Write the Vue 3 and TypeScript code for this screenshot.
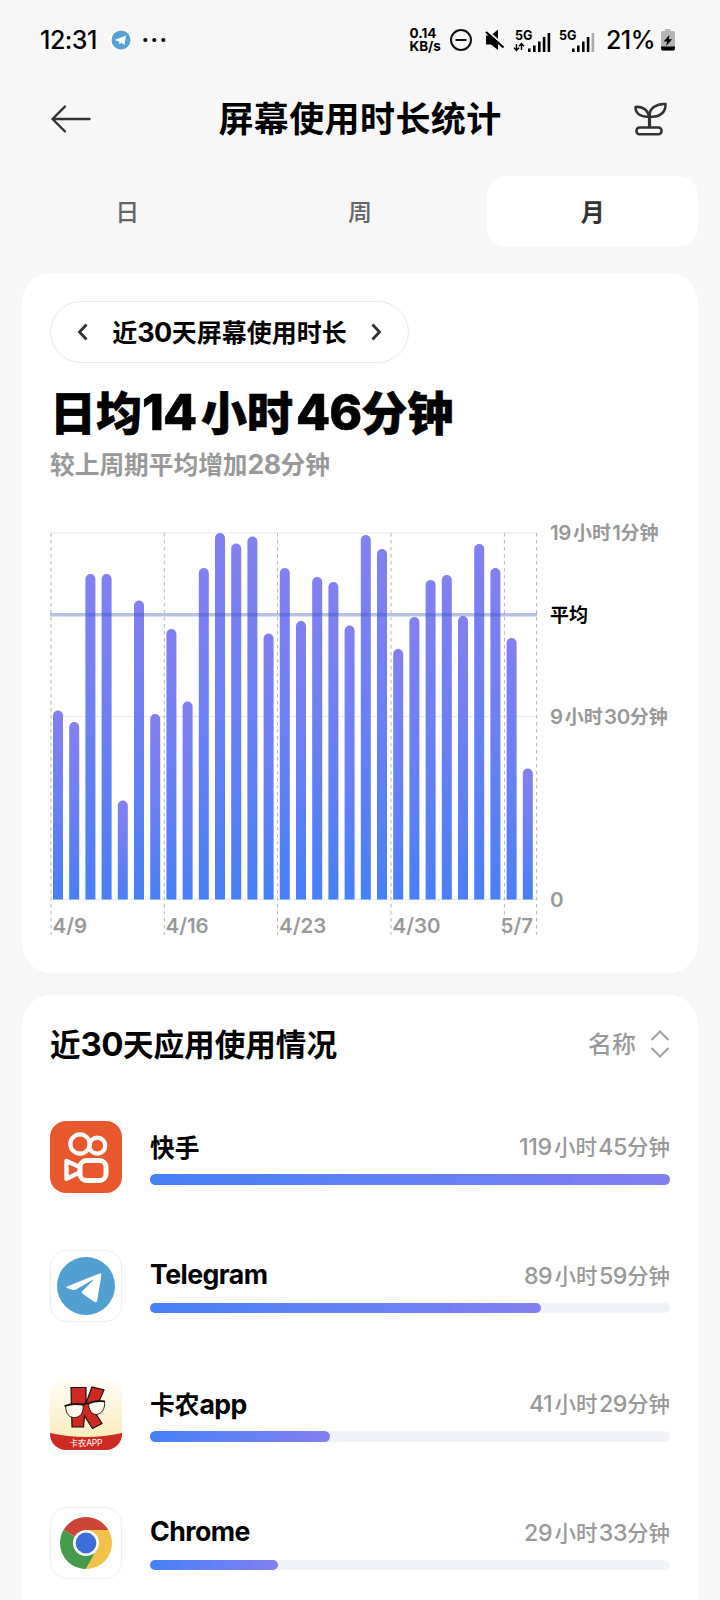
<script setup lang="ts">
import { computed, h, ref } from 'vue'

interface AppUsage {
  id: string
  name: string
  time: string
  percent: number
}

const tabs = ['日', '周', '月']
const activeTab = ref(2)

// digits and latin letters are set a little larger than the hanzi around them
const MixedText = (props: { text: string }) =>
  h(
    'span',
    { class: 'mixed' },
    props.text
      .split(/([0-9A-Za-z/]+)/)
      .filter(Boolean)
      .map((part) => (/[0-9A-Za-z]/.test(part) ? h('span', { class: 'latin' }, part) : part))
  )
MixedText.props = ['text']

const plot = { left: 1, right: 487, top: 13, bottom: 379.5, foot: 415 }
const step = 16.2

// bar heights in plot units, one per day
const days = [
  189, 177.5, 325.5, 325.5, 99, 299, 185.5, 270.5, 198, 331.5,
  366.5, 356, 363, 266, 331.5, 278.5, 322.5, 317.5, 274, 364.5,
  350.5, 250.5, 282.5, 319.5, 324.5, 283.5, 355.5, 331.5, 261.5, 131
]

const barPath = (index: number, height: number) => {
  const x = plot.left + 2 + index * step
  const y = plot.bottom - height
  return `M${x} ${plot.bottom}V${y + 5}a5 5 0 0 1 10 0V${plot.bottom}z`
}

const bars = computed(() => days.map((height, index) => barPath(index, height)))
const weekLines = [1, 114.3, 227.6, 341, 454.4, 486.6]

const dates = [
  { x: 2.5, label: '4/9' },
  { x: 115.5, label: '4/16' },
  { x: 229, label: '4/23' },
  { x: 342.5, label: '4/30' },
  { x: 450.5, label: '5/7' }
]

const apps: AppUsage[] = [
  { id: 'kuaishou', name: '快手', time: '119小时45分钟', percent: 100 },
  { id: 'telegram', name: 'Telegram', time: '89小时59分钟', percent: 75.1 },
  { id: 'kanong', name: '卡农app', time: '41小时29分钟', percent: 34.6 },
  { id: 'chrome', name: 'Chrome', time: '29小时33分钟', percent: 24.7 }
]
</script>

<template>
  <div class="screen">
    <div class="status">
      <span class="clock">12:31</span>
      <svg class="status-telegram" width="22" height="22" viewBox="0 0 22 22">
        <circle cx="11" cy="11" r="11" fill="#fff" />
        <circle cx="11" cy="11" r="9.5" fill="#54a3d4" />
        <path d="M4.5 11 16 6.6 14.5 16l-3.3-2.2-1.7 1.6-.4-2.8z" fill="#fff" />
      </svg>
      <svg width="22" height="6" viewBox="0 0 22 6">
        <circle cx="2.3" cy="3" r="2.1" />
        <circle cx="11.3" cy="3" r="2.1" />
        <circle cx="20.3" cy="3" r="2.1" />
      </svg>
      <span class="spacer" />
      <span class="speed"><span>0.14</span><span>KB/s</span></span>
      <svg class="dnd" width="24" height="24" viewBox="0 0 24 24" fill="none" stroke="#111" stroke-width="2">
        <circle cx="12" cy="12" r="10" />
        <path d="M6.5 12h11" />
      </svg>
      <svg class="mute" width="20" height="24" viewBox="0 0 20 24">
        <path d="M1 7.5h5L13 1.5V22l-7-5.5H1z" />
        <path d="M2 2.5l18 16" stroke="#f7f7f7" stroke-width="2" />
        <path d="M1 4l17.5 15.5" stroke="#000" stroke-width="2.2" />
      </svg>
      <svg class="signal" width="38" height="26" viewBox="0 0 38 26">
        <text x="1" y="12.5" textLength="17.5" lengthAdjust="spacingAndGlyphs">5G</text>
        <path d="M2.5 17v6M0 20.7l2.5 2.8 2.5-2.8M7.5 23v-6M5 19.3l2.5-2.8 2.5 2.8" fill="none" stroke="#000" stroke-width="1.4" />
        <path d="M14 21.5h2.6V25H14zM19 18.5h2.6V25H19zM24 14.5h2.6V25H24zM28.8 10h2.6v15h-2.6zM33.6 6h2.6v19h-2.6z" />
      </svg>
      <svg class="signal" width="38" height="26" viewBox="0 0 38 26">
        <text x="1" y="12.5" textLength="17.5" lengthAdjust="spacingAndGlyphs">5G</text>
        <path d="M14 21.5h2.6V25H14zM19 18.5h2.6V25H19zM24 14.5h2.6V25H24zM28.8 10h2.6v15h-2.6z" />
        <path d="M33.6 6h2.6v19h-2.6z" fill="#aaa" />
      </svg>
      <span class="percent">21%</span>
      <svg class="battery" width="16" height="22" viewBox="0 0 16 22">
        <path d="M5 0h5.5v2H13a2 2 0 0 1 2 2v15.5a2 2 0 0 1-2 2H3a2 2 0 0 1-2-2V4a2 2 0 0 1 2-2h2z" fill="#b5b5b5" />
        <path d="M1 17.5h14v2a2 2 0 0 1-2 2H3a2 2 0 0 1-2-2z" />
        <path d="M9.5 6l-6 6.5h3.6L6.2 17l6-6.7H8.6z" />
      </svg>
    </div>

    <header class="header">
      <svg width="40" height="28" viewBox="0 0 40 28" fill="none" stroke="#333" stroke-width="2.4" stroke-linecap="round" stroke-linejoin="round">
        <path d="M38.5 14h-37M14 1.5L1.5 14 14 26.5" />
      </svg>
      <h1>屏幕使用时长统计</h1>
      <svg width="34" height="34" viewBox="0 0 34 34" fill="none" stroke="#333" stroke-width="2.6" stroke-linejoin="round">
        <path d="M15 14.5C13 6.500 22 1.500 30.500 2c.5 8-6 14-15.500 12.500z" />
        <path d="M14 14.500C13 8 7 4 .5 5c0 7 6 10.500 13.500 9.500z" />
        <path d="M14.500 14v12" stroke-width="3.2" />
        <rect x="1.5" y="25.5" width="25" height="6.7" rx="3" />
      </svg>
    </header>

    <nav class="tabs">
      <button
        v-for="(tab, index) in tabs"
        :key="tab"
        class="tab"
        :class="{ 'tab-active': index === activeTab }"
        @click="activeTab = index"
      >
        {{ tab }}
      </button>
    </nav>

    <section class="card summary">
      <div class="range">
        <svg width="12" height="18" viewBox="0 0 12 18"><path d="M9.5 1.5L2.5 9l7 7.5" /></svg>
        <MixedText class="range-label" text="近30天屏幕使用时长" />
        <svg width="12" height="18" viewBox="0 0 12 18"><path d="M2.5 1.5l7 7.5-7 7.5" /></svg>
      </div>
      <MixedText class="average" text="日均14小时46分钟" />
      <MixedText class="compare" text="较上周期平均增加28分钟" />

      <div class="chart">
        <svg width="488" height="420" viewBox="0 0 488 420">
          <defs>
            <linearGradient id="bar-fill" x1="0" y1="0" x2="0" y2="1">
              <stop offset="0" stop-color="#8380f0" />
              <stop offset="0.5" stop-color="#6a80f4" />
              <stop offset="1" stop-color="#4780f5" />
            </linearGradient>
          </defs>
          <path class="grid-line" :d="`M1 ${plot.top}H487M1 196.500H487M1 ${plot.bottom}H487`" />
          <path v-for="(d, index) in bars" :key="index" :d="d" fill="url(#bar-fill)" />
          <path
            v-for="x in weekLines"
            :key="x"
            class="week-line"
            :d="`M${x} ${plot.top}V${plot.foot}`"
          />
          <path d="M0 94.800H487" stroke="#3358b8" stroke-opacity="0.36" stroke-width="3.6" />
          <text v-for="date in dates" :key="date.label" class="date" :x="date.x" y="413">{{ date.label }}</text>
        </svg>
        <div class="scale">
          <MixedText text="19小时1分钟" />
          <MixedText class="scale-average" text="平均" />
          <MixedText class="scale-half" text="9小时30分钟" />
          <MixedText class="scale-zero" text="0" />
        </div>
      </div>
    </section>

    <section class="card usage">
      <div class="usage-head">
        <h2><MixedText text="近30天应用使用情况" /></h2>
        <div class="sort">
          <span>名称</span>
          <svg width="20" height="30" viewBox="0 0 20 30" fill="none" stroke="#a3a3a3" stroke-width="2.2">
            <path d="M1.5 11L10 2.5l8.5 8.5M1.5 19l8.5 8.5 8.5-8.5" />
          </svg>
        </div>
      </div>

      <div v-for="app in apps" :key="app.id" class="app">
        <svg v-if="app.id === 'kuaishou'" width="72" height="72" viewBox="0 0 72 72">
          <rect width="72" height="72" rx="16" fill="#e9582c" />
          <g fill="none" stroke="#fff" stroke-width="4.2">
            <circle cx="30" cy="23" r="9.7" />
            <circle cx="47.3" cy="24.7" r="8" />
            <rect x="30" y="39.5" width="26" height="20" rx="6.5" stroke-width="5" />
            <path d="M28.5 45.5L16.5 40v17.800l12-5.800" stroke-width="4.4" stroke-linejoin="round" />
          </g>
        </svg>
        <svg v-else-if="app.id === 'telegram'" width="72" height="72" viewBox="0 0 72 72">
          <rect class="icon-plate" x="0.5" y="0.5" width="71" height="71" rx="16" />
          <circle cx="36" cy="36" r="29" fill="#529fd2" />
          <path d="M17.5 36.2L49.5 23.5c1.2-.4 2.1.2 1.9 1.6l-4.2 25.5c-.3 1.6-1.3 2.2-2.7 1.3L33 44c-1.5-1-1.5-2-.3-3.200L43 30.500c.5-.6 0-1-.7-.5L26 39.500c-1.200.7-2.200.7-3.500.3l-5-1.500c-1.700-.6-1.700-1.400 0-2.100z" fill="#fff" />
        </svg>
        <svg v-else-if="app.id === 'kanong'" width="72" height="72" viewBox="0 0 72 72">
          <defs>
            <clipPath id="kanong-clip"><rect width="72" height="72" rx="16" /></clipPath>
            <linearGradient id="kanong-fill" x1="0" y1="0" x2="0" y2="1">
              <stop offset="0" stop-color="#fffdf8" />
              <stop offset="0.8" stop-color="#faeebf" />
            </linearGradient>
          </defs>
          <g clip-path="url(#kanong-clip)">
            <rect width="72" height="72" fill="url(#kanong-fill)" />
            <path d="M0 55q36 8 72 0v17H0z" fill="#cc2a22" />
            <path d="M21 9.500h15V25L42 9l12 3-7.500 17-3 3L52 45.500 42.500 50.500 34.500 38l-1 11H22z" fill="#cc2a22" stroke="#1a1210" stroke-width="1.2" />
            <path d="M15.500 28q9-2.500 17.500-1c1 8-3 12.500-8.500 12.500S16 36 15.500 28zM38.500 24.500q8-2.500 16-1.500c1 7-2.500 13-8 13.500-5 0-8-5-8-12z" fill="#fffaf0" stroke="#1a1210" stroke-width="0.9" />
            <path d="M14.500 28q9-3.500 19-1.500 2.500-1.500 5-1 8-3.500 16.500-2" fill="none" stroke="#1a1210" stroke-width="1.7" />
            <text class="kanong-label" x="36" y="68" text-anchor="middle" textLength="33">卡农APP</text>
          </g>
        </svg>
        <svg v-else width="72" height="72" viewBox="0 0 72 72">
          <rect class="icon-plate" x="0.5" y="0.5" width="71" height="71" rx="16" />
          <path d="M36 36L13.500 23A26 26 0 0 1 58.500 23z" fill="#cc4437" />
          <path d="M13.500 23A26 26 0 0 0 36 62l11-19.600L36 36z" fill="#479a4c" />
          <path d="M58.500 23A26 26 0 0 1 36 62l11.300-19.500L36 23z" fill="#f3c04a" />
          <circle cx="36" cy="36" r="13" fill="#fff" />
          <circle cx="36" cy="36" r="10.4" fill="#3c6fdb" />
        </svg>
        <div class="app-body">
          <div class="app-line">
            <MixedText class="app-name" :text="app.name" />
            <MixedText class="app-time" :text="app.time" />
          </div>
          <div class="track">
            <div class="fill" :style="{ width: `${app.percent}%` }" />
          </div>
        </div>
      </div>
    </section>
  </div>
</template>

<style>
body {
  background: #f7f7f7;
}

.mixed {
  white-space: nowrap;
}

.mixed .latin {
  margin-right: 0.1em;
  font-size: 1.08em;
  letter-spacing: -0.02em;
}

.mixed .latin:not(:first-child) {
  margin-left: 0.06em;
}

.mixed .latin:last-child {
  margin-right: 0;
}
</style>

<style scoped>
.screen {
  box-sizing: border-box;
  width: 720px;
  height: 1600px;
  overflow: hidden;
  background: #f7f7f7;
  color: #000;
  font-family: Inter, 'Noto Sans CJK SC', sans-serif;
}

svg {
  flex: none;
  overflow: visible;
}

.status {
  display: flex;
  align-items: center;
  box-sizing: border-box;
  height: 80px;
  padding: 0 44px 0 40px;
}

.clock,
.percent {
  font-size: 25px;
  font-weight: 500;
  letter-spacing: -0.5px;
}

.status-telegram {
  margin: 0 11px 0 13px;
}

.spacer {
  flex: 1;
}

.speed {
  display: flex;
  flex-direction: column;
  font-size: 13.5px;
  font-weight: 700;
  line-height: 13px;
}

.dnd {
  margin-left: 8px;
}

.mute {
  margin: 0 9px 0 12px;
}

.signal {
  margin-right: 6px;
}

.signal text {
  font-size: 13.5px;
  font-weight: 700;
}

.percent {
  margin: 0 5px 0 4px;
}

.header {
  display: flex;
  align-items: center;
  justify-content: space-between;
  box-sizing: border-box;
  height: 78px;
  padding: 0 51px;
}

h1 {
  margin: -5px 6px 0 0;
  font-size: 35px;
  font-weight: 700;
  letter-spacing: 0.4px;
}

.tabs {
  display: grid;
  grid-template-columns: repeat(3, 1fr);
  gap: 22px;
  height: 71px;
  margin: 18px 22px 26px;
}

.tab {
  padding: 0 0 3px;
  border: 0;
  border-radius: 20px;
  background: none;
  color: #666;
  font: 500 24px Inter, 'Noto Sans CJK SC', sans-serif;
}

.tab-active {
  background: #fff;
  color: #333;
  font-weight: 700;
}

.card {
  box-sizing: border-box;
  margin: 0 22px;
  border-radius: 30px;
  background: #fff;
}

.summary {
  display: flex;
  flex-direction: column;
  align-items: flex-start;
  height: 700px;
  padding: 28px;
}

.range {
  display: flex;
  align-items: center;
  justify-content: space-between;
  box-sizing: border-box;
  width: 359px;
  height: 62px;
  padding: 0 26px;
  border: 1.5px solid #e8e8e8;
  border-radius: 31px;
}

.range path {
  fill: none;
  stroke: #333;
  stroke-width: 2.8;
}

.range-label {
  margin-top: -3px;
  font-size: 25px;
  font-weight: 700;
}

.average {
  margin-top: 17px;
  font-size: 46px;
  font-weight: 800;
  line-height: 64px;
  -webkit-text-stroke: 0.6px #000;
}

.compare {
  color: #999;
  font-size: 24.7px;
  font-weight: 700;
  line-height: 38px;
}

.chart {
  display: flex;
  gap: 12px;
  margin-top: 36px;
}

.grid-line {
  stroke: #e9e9e9;
  stroke-width: 1;
}

.week-line {
  stroke: #b4b4b4;
  stroke-width: 1;
  stroke-dasharray: 3.5 3.5;
}

.date {
  fill: #999;
  font-size: 20.5px;
  font-weight: 600;
}

.scale {
  display: flex;
  flex-direction: column;
  color: #999;
  font-size: 19px;
  font-weight: 600;
  line-height: 26px;
}

.scale-average {
  margin-top: 56px;
  color: #000;
}

.scale-half {
  margin-top: 75px;
}

.scale-zero {
  margin-top: 156px;
}

.usage {
  height: 640px;
  margin-top: 22px;
  padding: 0 28px;
}

.usage-head {
  display: flex;
  align-items: center;
  justify-content: space-between;
  height: 98px;
}

h2 {
  margin: -3px 0 0;
  font-size: 30.6px;
  font-weight: 700;
}

.sort {
  display: flex;
  align-items: center;
  gap: 14px;
  color: #999;
  font-size: 24px;
  font-weight: 500;
}

.sort span {
  margin-top: -4px;
}

.app {
  display: flex;
  gap: 28px;
  height: 72px;
  margin: 28px 0 56.5px;
}

.icon-plate {
  fill: #fff;
  stroke: #eee;
}

.kanong-label {
  fill: #fff;
  font-size: 8.5px;
}

.app-body {
  flex: 1;
}

.app-line {
  display: flex;
  align-items: center;
  justify-content: space-between;
  box-sizing: border-box;
  height: 53px;
  padding-bottom: 4px;
}

.app-name {
  font-size: 24.7px;
  font-weight: 700;
}

.app-time {
  color: #999;
  font-size: 21.5px;
  font-weight: 500;
}

.track {
  height: 10.5px;
  border-radius: 6px;
  background: #f2f3f8;
}

.fill {
  height: 100%;
  border-radius: 6px;
  background: linear-gradient(90deg, #4780f5, #6a80f4 60%, #8380f0);
}

.app + .app {
  margin-top: 0;
}
</style>
